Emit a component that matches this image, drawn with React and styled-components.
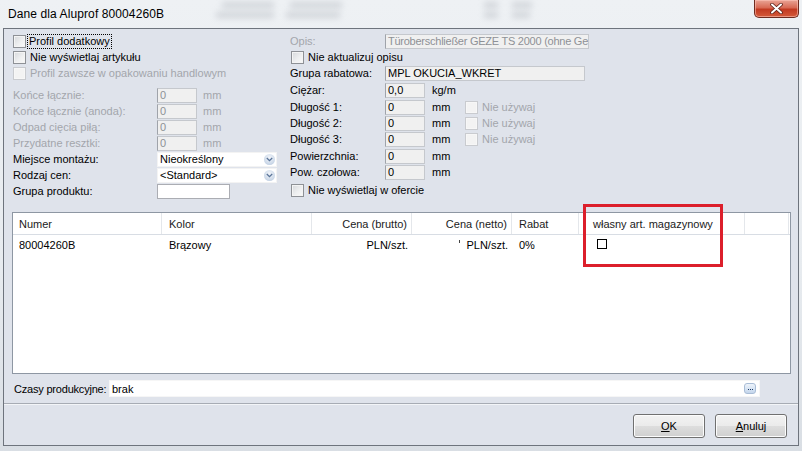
import React from 'react';
import styled, { createGlobalStyle, css } from 'styled-components';

const GlobalStyle = createGlobalStyle`
  html, body { margin: 0; padding: 0; }
  body {
    font-family: "Liberation Sans", Arial, sans-serif;
    font-size: 11px;
    color: #000;
  }
  * { box-sizing: border-box; }
`;

const Screen = styled.div`
  position: relative;
  width: 802px;
  height: 451px;
  overflow: hidden;
  background: linear-gradient(180deg, #eef1f4 0%, #e7ebef 60%, #d9dee4 100%);
`;

const TitleBar = styled.div`
  position: relative;
  height: 28px;
  display: flex;
  align-items: flex-start;
  justify-content: space-between;
  padding-left: 8px;
`;

const Title = styled.div`
  font-size: 12px;
  line-height: 12px;
  margin-top: 8px;
  color: #000;
  letter-spacing: 0.1px;
`;

// blurred window content that shows through the glass title bar
const Smear = styled.div`
  position: absolute;
  top: ${p => p.top}px;
  left: ${p => p.left}px;
  width: ${p => p.w}px;
  height: 6px;
  background: #9aa0a8;
  opacity: 0.35;
  filter: blur(3px);
`;

const CloseButton = styled.div`
  width: 45px;
  height: 18px;
  margin-right: 3px;
  border: 1px solid #6e2b20;
  border-top: none;
  border-radius: 0 0 5px 5px;
  background: linear-gradient(180deg, #e9a496 0%, #d86a55 45%, #c23a22 55%, #d45a3a 100%);
  box-shadow: inset 0 0 0 1px rgba(255, 200, 190, 0.55);
  display: flex;
  align-items: center;
  justify-content: center;
`;

const Client = styled.div`
  margin: 0 3px;
  height: 418px;
  border: 1px solid #6e747d;
  background: #dfe3eb;
  display: flex;
  flex-direction: column;
`;

const Form = styled.div`
  display: flex;
  padding: 4px 0 0 9px;
  height: 170px;
`;

const Column = styled.div`
  display: flex;
  flex-direction: column;
  width: ${p => p.w}px;
`;

const Row = styled.div`
  display: flex;
  align-items: center;
  height: ${p => p.h || 16}px;
  margin-top: ${p => p.mt || 0}px;
  padding-left: ${p => p.pl || 0}px;
`;

const Label = styled.div`
  width: ${p => p.w}px;
  flex-shrink: 0;
  white-space: nowrap;
  color: ${p => (p.disabled ? '#a3a6ab' : '#000')};
`;

const Box = styled.div`
  width: 13px;
  height: 13px;
  flex-shrink: 0;
  border: 1px solid ${p => (p.disabled ? '#c9cbcf' : '#8e9196')};
  background: ${p =>
    p.disabled ? '#f3f3f3' : 'linear-gradient(135deg, #d6d8db 0%, #eeeff0 55%, #fafafa 100%)'};
  box-shadow: inset 0 0 0 1px ${p => (p.disabled ? '#f7f7f7' : '#f4f4f4')};
`;

const CheckText = styled.span`
  margin-left: ${p => p.gap || 3}px;
  padding: 0 1px;
  line-height: 13px;
  white-space: nowrap;
  color: ${p => (p.disabled ? '#a3a6ab' : '#000')};
  ${p =>
    p.focused &&
    css`
      outline: 1px dotted #000;
      outline-offset: 0px;
    `}
`;

const TextInput = styled.div`
  width: ${p => p.w}px;
  height: 15px;
  flex-shrink: 0;
  border: 1px solid ${p => (p.white ? '#abadb3' : '#c5c8cd')};
  border-left-color: ${p => (p.white ? '#abadb3' : '#9fa3aa')};
  background: ${p => (p.white ? '#fff' : '#f0f0f0')};
  padding-left: 2px;
  line-height: 13px;
  white-space: nowrap;
  overflow: hidden;
  letter-spacing: ${p => p.tight ? '-0.25px' : 'normal'};
  color: ${p => (p.disabled ? '#8e9196' : '#000')};
`;

const Unit = styled.div`
  width: ${p => p.w || 40}px;
  flex-shrink: 0;
  padding-left: ${p => p.pl || 6}px;
  color: ${p => (p.disabled ? '#a3a6ab' : '#000')};
`;

const Combo = styled.div`
  width: 120px;
  height: 15px;
  display: flex;
  align-items: center;
  justify-content: space-between;
  background: #fff;
  border: 1px solid #f3f3f3;
  padding-left: 2px;
  line-height: 13px;
`;

const ComboArrow = styled.div`
  width: 11px;
  height: 11px;
  margin-right: 1px;
  border-radius: 50%;
  background: radial-gradient(circle at 50% 35%, #f2f5fa 0%, #cfdbea 60%, #b3c4da 100%);
  display: flex;
  align-items: center;
  justify-content: center;
`;

const ListBox = styled.div`
  position: relative;
  margin: 13px 7px 0 8px;
  height: 162px;
  background: #fff;
  border: 1px solid #8e97a3;
  display: flex;
  flex-direction: column;
`;

const HeaderRow = styled.div`
  display: flex;
  height: 22px;
  border-bottom: 1px solid #d8dde4;
`;

const DataRow = styled.div`
  display: flex;
  height: 19px;
`;

const Cell = styled.div`
  width: ${p => p.w}px;
  flex-shrink: 0;
  display: flex;
  align-items: center;
  justify-content: ${p => (p.right ? 'flex-end' : 'flex-start')};
  padding: ${p => (p.right ? '0 4px 0 0' : `0 0 0 ${p.pl || 6}px`)};
  white-space: nowrap;
  ${p =>
    p.head &&
    css`
      border-right: 1px solid #e4e7eb;
      color: #1b1b1b;
    `}
`;

const GridCheck = styled.div`
  width: 10px;
  height: 10px;
  border: 1px solid #000;
  background: #fff;
  margin-left: 4px;
  margin-top: -2px;
`;

const Tick = styled.span`
  width: 1px;
  height: 3px;
  background: #444;
  margin-right: 6px;
  align-self: flex-start;
  margin-top: 5px;
`;

const Highlight = styled.div`
  position: absolute;
  left: 583px;
  top: 204px;
  width: 140px;
  height: 63px;
  border: 3px solid #dc1f2b;
  pointer-events: none;
`;

const TimesRow = styled.div`
  display: flex;
  align-items: center;
  margin: 6px 0 0 10px;
  height: 17px;
`;

const TimesLabel = styled.span`
  width: 95px;
  flex-shrink: 0;
  white-space: nowrap;
  letter-spacing: -0.2px;
`;

const TimesInput = styled.div`
  width: 651px;
  height: 17px;
  background: #fff;
  border: 1px solid #f6f6f6;
  display: flex;
  align-items: center;
  justify-content: space-between;
  padding-left: 2px;
`;

const DotsButton = styled.div`
  width: 12px;
  height: 11px;
  margin-right: 3px;
  border-radius: 3px;
  border: 1px solid #a9bdd6;
  background: linear-gradient(180deg, #eef4fb 0%, #c4d6ec 100%);
  display: flex;
  align-items: flex-end;
  justify-content: center;
  gap: 1px;
  padding-bottom: 3px;
`;

const Dot = styled.i`
  width: 1px;
  height: 1px;
  background: #1d3a66;
`;

const Separator = styled.div`
  margin-top: 6px;
  height: 2px;
  border-top: 1px solid #a7acb4;
  border-bottom: 1px solid #f3f5f8;
`;

const ButtonBar = styled.div`
  display: flex;
  justify-content: flex-end;
  gap: 10px;
  padding: 9px 11px 0 0;
`;

const Button = styled.div`
  width: 72px;
  height: 24px;
  border: 1px solid #707070;
  border-radius: 3px;
  background: linear-gradient(180deg, #f2f2f2 0%, #ebebeb 48%, #dddddd 52%, #cfcfcf 100%);
  box-shadow: inset 0 0 0 1px #fcfcfc;
  display: flex;
  align-items: center;
  justify-content: center;
  & u { text-decoration: underline; text-underline-offset: 1px; }
`;

const Check = ({ children, disabled, focused, gap }) => (
  <>
    <Box disabled={disabled} />
    <CheckText disabled={disabled} focused={focused} gap={gap}>
      {children}
    </CheckText>
  </>
);

const Chevron = () => (
  <svg width="7" height="5" viewBox="0 0 7 5">
    <path d="M0.8 1 L3.5 3.6 L6.2 1" fill="none" stroke="#5a7498" strokeWidth="1.3" />
  </svg>
);

const leftMeasures = ['Końce łącznie:', 'Końce łącznie (anoda):', 'Odpad cięcia piłą:', 'Przydatne resztki:'];

const columns = [
  { key: 'num', title: 'Numer', w: 149, value: '80004260B' },
  { key: 'kolor', title: 'Kolor', w: 150, value: 'Brązowy', pl: 7 },
  { key: 'brutto', title: 'Cena (brutto)', w: 100, value: 'PLN/szt.', right: true },
  { key: 'netto', title: 'Cena (netto)', w: 100, value: 'PLN/szt.', right: true, tick: true },
  { key: 'rabat', title: 'Rabat', w: 67, value: '0%', pl: 7 },
  { key: 'wlasny', title: 'własny art. magazynowy', w: 166, check: true, pl: 14 },
  { key: 'rest', title: '', w: 44 },
];

export default function App() {
  return (
    <Screen>
      <GlobalStyle />
      <TitleBar>
        <Smear top={2} left={222} w={52} />
        <Smear top={2} left={290} w={52} />
        <Smear top={12} left={216} w={58} />
        <Smear top={12} left={286} w={54} />
        <Smear top={2} left={484} w={14} />
        <Smear top={2} left={512} w={20} />
        <Smear top={12} left={484} w={14} />
        <Smear top={12} left={512} w={18} />
        <Title>Dane dla Aluprof 80004260B</Title>
        <CloseButton>
          <svg width="13" height="11" viewBox="0 0 13 11">
            <path d="M2 1.5 L11 9.5 M11 1.5 L2 9.5" stroke="#5a2018" strokeWidth="3.6" strokeLinecap="round" />
            <path d="M2 1.5 L11 9.5 M11 1.5 L2 9.5" stroke="#fff" strokeWidth="2" strokeLinecap="round" />
          </svg>
        </CloseButton>
      </TitleBar>

      <Client>
        <Form>
          <Column w={276}>
            <Row>
              <Check focused gap={2}>Profil dodatkowy</Check>
            </Row>
            <Row>
              <Check>Nie wyświetlaj artykułu</Check>
            </Row>
            <Row h={17}>
              <Check disabled>Profil zawsze w opakowaniu handlowym</Check>
            </Row>
            {leftMeasures.map((l, i) => (
              <Row key={l} mt={i === 0 ? 5 : 0}>
                <Label w={144} disabled>{l}</Label>
                <TextInput w={40} disabled>0</TextInput>
                <Unit disabled>mm</Unit>
              </Row>
            ))}
            <Row>
              <Label w={144}>Miejsce montażu:</Label>
              <Combo>
                Nieokreślony
                <ComboArrow><Chevron /></ComboArrow>
              </Combo>
            </Row>
            <Row>
              <Label w={144}>Rodzaj cen:</Label>
              <Combo>
                &lt;Standard&gt;
                <ComboArrow><Chevron /></ComboArrow>
              </Combo>
            </Row>
            <Row>
              <Label w={144}>Grupa produktu:</Label>
              <TextInput w={73} white />
            </Row>
          </Column>

          <Column w={320}>
            <Row pl={1}>
              <Label w={95} disabled>Opis:</Label>
              <TextInput w={204} disabled tight>Türoberschließer GEZE TS 2000 (ohne Ge</TextInput>
            </Row>
            <Row pl={2}>
              <Check>Nie aktualizuj opisu</Check>
            </Row>
            <Row pl={1}>
              <Label w={95}>Grupa rabatowa:</Label>
              <TextInput w={200}>MPL OKUCIA_WKRET</TextInput>
            </Row>
            <Row pl={1} mt={1}>
              <Label w={95}>Ciężar:</Label>
              <TextInput w={40}>0,0</TextInput>
              <Unit pl={7}>kg/m</Unit>
            </Row>
            {['Długość 1:', 'Długość 2:', 'Długość 3:'].map((l, i) => (
              <Row key={l} pl={1} mt={i === 0 ? 1 : 0}>
                <Label w={95}>{l}</Label>
                <TextInput w={40}>0</TextInput>
                <Unit pl={7} w={40}>mm</Unit>
                <Check disabled>Nie używaj</Check>
              </Row>
            ))}
            <Row pl={1} mt={1}>
              <Label w={95}>Powierzchnia:</Label>
              <TextInput w={40}>0</TextInput>
              <Unit pl={7}>mm</Unit>
            </Row>
            <Row pl={1}>
              <Label w={95}>Pow. czołowa:</Label>
              <TextInput w={40}>0</TextInput>
              <Unit pl={7}>mm</Unit>
            </Row>
            <Row pl={2} mt={2}>
              <Check>Nie wyświetlaj w ofercie</Check>
            </Row>
          </Column>
        </Form>

        <ListBox>
          <HeaderRow>
            {columns.map(c => (
              <Cell key={c.key} head w={c.w} right={c.right} pl={c.pl}>
                {c.title}
              </Cell>
            ))}
          </HeaderRow>
          <DataRow>
            {columns.map(c => (
              <Cell key={c.key} w={c.w} right={c.right} pl={c.pl}>
                {c.tick && <Tick />}
                {c.check ? <GridCheck /> : c.value}
              </Cell>
            ))}
          </DataRow>
        </ListBox>

        <TimesRow>
          <TimesLabel>Czasy produkcyjne:</TimesLabel>
          <TimesInput>
            brak
            <DotsButton><Dot /><Dot /><Dot /></DotsButton>
          </TimesInput>
        </TimesRow>

        <Separator />

        <ButtonBar>
          <Button><span><u>O</u>K</span></Button>
          <Button><span><u>A</u>nuluj</span></Button>
        </ButtonBar>
      </Client>

      <Highlight />
    </Screen>
  );
}
